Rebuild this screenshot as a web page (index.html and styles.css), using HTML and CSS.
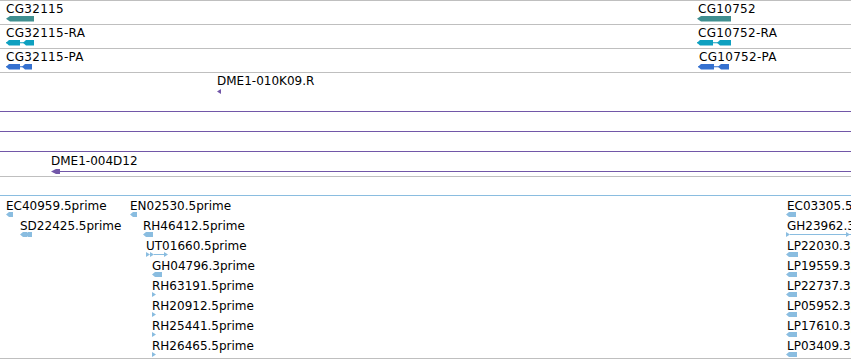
FILE: index.html
```html
<!DOCTYPE html>
<html lang="en">
<head>
  <meta charset="UTF-8">
  <title>Track view</title>
  <link rel="stylesheet" href="styles.css">
</head>
<body>
  <div class="panel">
    <svg class="track t-gene" id="genes"></svg>
    <svg class="track t-gene" id="transcripts"></svg>
    <svg class="track t-gene" id="proteins"></svg>
    <svg class="track t-clone" id="clones"></svg>
    <svg class="track t-est" id="ests"></svg>
  </div>

  <script>
    const NS = 'http://www.w3.org/2000/svg';

    function el(svg, tag, attrs, text) {
      const e = document.createElementNS(NS, tag);
      for (const k in attrs) e.setAttribute(k, attrs[k]);
      if (text) e.textContent = text;
      svg.appendChild(e);
      return e;
    }

    function label(svg, x, y, text, cls) {
      el(svg, 'text', { x: x, y: y, class: 'label' + (cls ? ' ' + cls : '') }, text);
    }

    // bloque con punta a la izquierda (hebra -)
    function leftBlock(svg, x1, x2, yc, color, tip, half) {
      tip = tip || 3;
      half = half || 2.75;
      const pts = [
        [x1, yc], [x1 + tip, yc - half], [x2, yc - half],
        [x2, yc + half], [x1 + tip, yc + half]
      ].map(p => p.join(',')).join(' ');
      el(svg, 'polygon', { points: pts, fill: color });
    }

    function rightTri(svg, x, yc, color) {
      const pts = [[x, yc - 2.5], [x + 4, yc], [x, yc + 2.5]].map(p => p.join(',')).join(' ');
      el(svg, 'polygon', { points: pts, fill: color });
    }

    function leftTri(svg, x, yc, color) {
      const pts = [[x, yc], [x + 4, yc - 2.5], [x + 4, yc + 2.5]].map(p => p.join(',')).join(' ');
      el(svg, 'polygon', { points: pts, fill: color });
    }

    function hline(svg, x1, x2, y, color) {
      el(svg, 'rect', { x: x1, y: y, width: x2 - x1, height: 1, fill: color });
    }

    // pistas de genes / transcritos / proteinas
    const geneTracks = [
      { id: 'genes', color: '#3f8f90', feats: [
        { label: 'CG32115', x: 6, exons: [[6, 34]] },
        { label: 'CG10752', x: 698, exons: [[697, 731]] }
      ]},
      { id: 'transcripts', color: '#0ea0c0', feats: [
        { label: 'CG32115-RA', x: 6, exons: [[6, 20], [23, 34]] },
        { label: 'CG10752-RA', x: 698, exons: [[697, 713], [717, 731]] }
      ]},
      { id: 'proteins', color: '#3571d0', feats: [
        { label: 'CG32115-PA', x: 6, exons: [[6, 20], [22, 32]] },
        { label: 'CG10752-PA', x: 699, exons: [[698, 714], [718, 729]] }
      ]}
    ];

    geneTracks.forEach(track => {
      const svg = document.getElementById(track.id);
      track.feats.forEach(f => {
        const yc = 17.75;
        label(svg, f.x, 12, f.label, 'wide');
        const first = f.exons[0][0];
        const last = f.exons[f.exons.length - 1][1];
        if (f.exons.length > 1) hline(svg, first, last, yc - 0.5, track.color);
        f.exons.forEach(ex => leftBlock(svg, ex[0], ex[1], yc, track.color, ex[1] - ex[0] > 20 ? 4 : 3));
      });
    });

    // clones BAC
    const clones = document.getElementById('clones');
    const purple = '#7257a8';
    label(clones, 217, 12, 'DME1-010K09.R');
    leftTri(clones, 217, 18.5, purple);
    [1, 2, 3].forEach(i => hline(clones, 0, 851, 18 + 20 * i, purple));
    label(clones, 51, 92, 'DME1-004D12');
    hline(clones, 56, 851, 98, purple);
    leftBlock(clones, 51, 60, 98.5, purple, 5, 2.5);

    // ESTs
    const ests = document.getElementById('ests');
    const blue = '#8abde0';
    hline(ests, 0, 851, 18, blue);

    const estRows = [
      { row: 1, label: 'EC40959.5prime', x: 6, glyph: 'left', w: 7 },
      { row: 1, label: 'EN02530.5prime', x: 130, glyph: 'left', w: 7 },
      { row: 1, label: 'EC03305.5prime', x: 787, glyph: 'left', w: 10 },
      { row: 2, label: 'SD22425.5prime', x: 20, glyph: 'double' },
      { row: 2, label: 'RH46412.5prime', x: 143, glyph: 'left', w: 10 },
      { row: 2, label: 'GH23962.3prime', x: 787, glyph: 'span', end: 851 },
      { row: 3, label: 'UT01660.5prime', x: 146, glyph: 'split', end: 168 },
      { row: 3, label: 'LP22030.3prime', x: 787, glyph: 'left', w: 12 },
      { row: 4, label: 'GH04796.3prime', x: 152, glyph: 'left', w: 10 },
      { row: 4, label: 'LP19559.3prime', x: 787, glyph: 'left', w: 11 },
      { row: 5, label: 'RH63191.5prime', x: 152, glyph: 'right' },
      { row: 5, label: 'LP22737.3prime', x: 787, glyph: 'left', w: 11 },
      { row: 6, label: 'RH20912.5prime', x: 152, glyph: 'right' },
      { row: 6, label: 'LP05952.3prime', x: 787, glyph: 'left', w: 11 },
      { row: 7, label: 'RH25441.5prime', x: 152, glyph: 'right' },
      { row: 7, label: 'LP17610.3prime', x: 787, glyph: 'left', w: 11 },
      { row: 8, label: 'RH26465.5prime', x: 152, glyph: 'right' },
      { row: 8, label: 'LP03409.3prime', x: 787, glyph: 'left', w: 11 }
    ];

    estRows.forEach(f => {
      const yc = 17.5 + 20 * f.row;
      const gx = f.x >= 786 ? 786 : f.x;
      label(ests, f.x, yc - 5, f.label);
      if (f.glyph === 'left') {
        leftBlock(ests, gx, gx + f.w, yc, blue, 3, 2.5);
      } else if (f.glyph === 'double') {
        leftBlock(ests, gx, gx + 7, yc, blue, 3, 2.5);
        leftBlock(ests, gx + 5, gx + 12, yc, blue, 3, 2.5);
      } else if (f.glyph === 'right') {
        rightTri(ests, gx, yc, blue);
      } else if (f.glyph === 'split') {
        rightTri(ests, gx, yc, blue);
        rightTri(ests, gx + 4, yc, blue);
        hline(ests, gx + 8, f.end - 4, yc - 0.5, blue);
        rightTri(ests, f.end - 4, yc, blue);
      } else if (f.glyph === 'span') {
        rightTri(ests, gx, yc, blue);
        hline(ests, gx + 4, f.end, yc - 0.5, blue);
        rightTri(ests, f.end - 5, yc, blue);
      }
    });
  </script>
</body>
</html>
```

FILE: styles.css
```css
* {
  margin: 0;
  padding: 0;
  box-sizing: content-box;
}
body {
  background: #fff;
  font-family: 'DejaVu Sans', sans-serif;
}
.panel {
  width: 851px;
  border-top: 1px solid #bfbfbf;
  overflow: hidden;
}
.track {
  display: block;
  width: 851px;
  border-bottom: 1px solid #bfbfbf;
}
.t-gene {
  height: 23px;
}
.t-clone {
  height: 103px;
}
.t-est {
  height: 181px;
}
.label {
  font-family: 'DejaVu Sans', sans-serif;
  font-size: 12px;
  fill: #000;
}
.label.wide {
  letter-spacing: 0.3px;
}
```
